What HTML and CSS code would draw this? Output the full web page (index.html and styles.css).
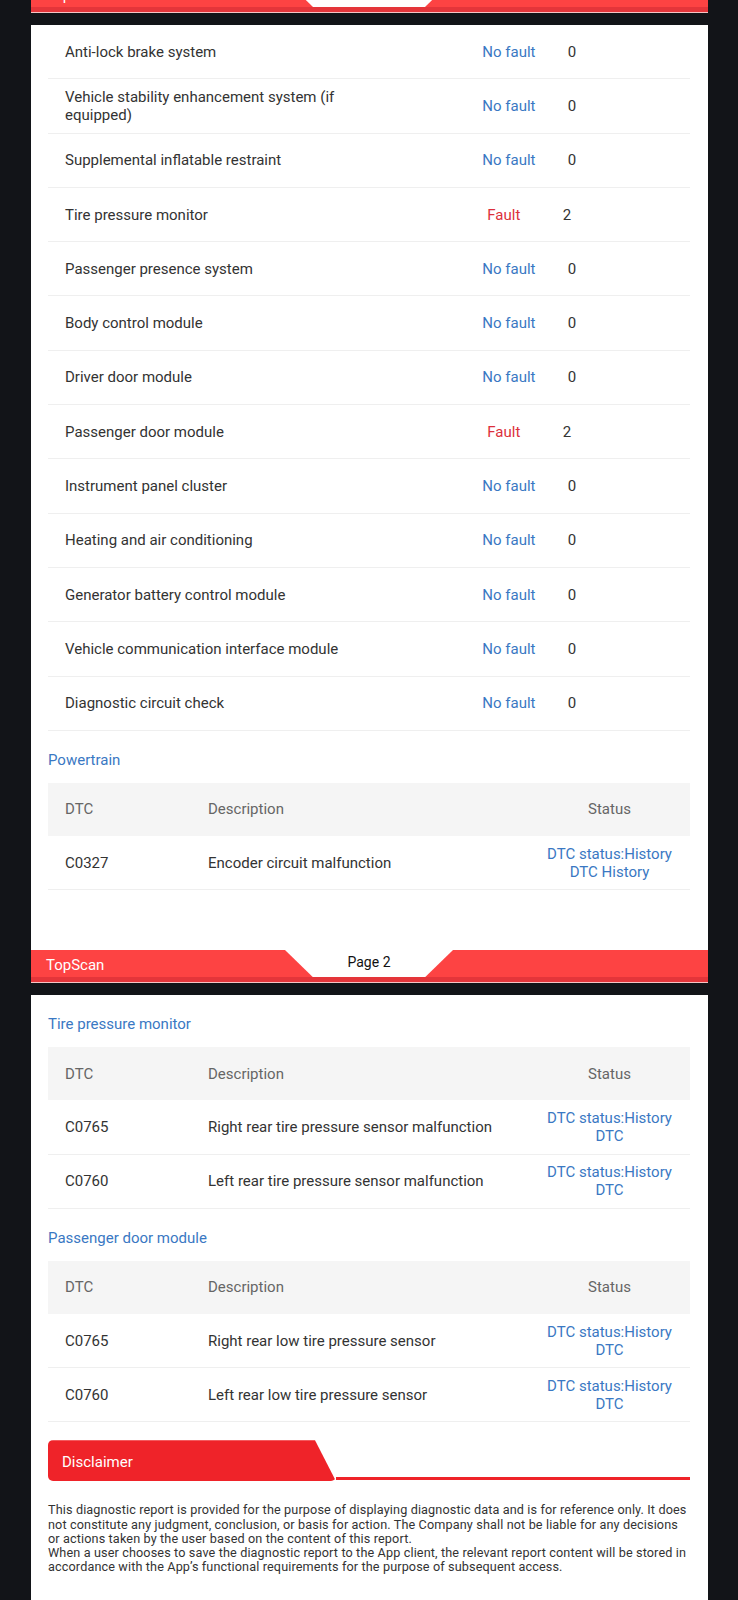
FILE: index.html
```html
<!DOCTYPE html>
<html lang="en">
<head>
  <meta charset="UTF-8">
  <title>Diagnostic Report</title>
  <link rel="stylesheet" href="styles.css">
</head>
<body>
  <!-- bottom of page 1, scrolled out of view -->
  <div class="page-foot cut">
    <div class="foot-main">
      <span class="brand">TopScan</span>
      <span class="notch"></span>
    </div>
    <div class="foot-strip"></div>
  </div>

  <div class="page">
    <div class="page-body first">
      <ul class="sys-list">
        <li class="sys-row"><span class="sys-name">Anti-lock brake system</span><span class="sys-result"><span class="ok">No fault</span><span class="count">0</span></span></li>
        <li class="sys-row"><span class="sys-name">Vehicle stability enhancement system (if equipped)</span><span class="sys-result"><span class="ok">No fault</span><span class="count">0</span></span></li>
        <li class="sys-row"><span class="sys-name">Supplemental inflatable restraint</span><span class="sys-result"><span class="ok">No fault</span><span class="count">0</span></span></li>
        <li class="sys-row"><span class="sys-name">Tire pressure monitor</span><span class="sys-result"><span class="bad">Fault</span><span class="count">2</span></span></li>
        <li class="sys-row"><span class="sys-name">Passenger presence system</span><span class="sys-result"><span class="ok">No fault</span><span class="count">0</span></span></li>
        <li class="sys-row"><span class="sys-name">Body control module</span><span class="sys-result"><span class="ok">No fault</span><span class="count">0</span></span></li>
        <li class="sys-row"><span class="sys-name">Driver door module</span><span class="sys-result"><span class="ok">No fault</span><span class="count">0</span></span></li>
        <li class="sys-row"><span class="sys-name">Passenger door module</span><span class="sys-result"><span class="bad">Fault</span><span class="count">2</span></span></li>
        <li class="sys-row"><span class="sys-name">Instrument panel cluster</span><span class="sys-result"><span class="ok">No fault</span><span class="count">0</span></span></li>
        <li class="sys-row"><span class="sys-name">Heating and air conditioning</span><span class="sys-result"><span class="ok">No fault</span><span class="count">0</span></span></li>
        <li class="sys-row"><span class="sys-name">Generator battery control module</span><span class="sys-result"><span class="ok">No fault</span><span class="count">0</span></span></li>
        <li class="sys-row"><span class="sys-name">Vehicle communication interface module</span><span class="sys-result"><span class="ok">No fault</span><span class="count">0</span></span></li>
        <li class="sys-row"><span class="sys-name">Diagnostic circuit check</span><span class="sys-result"><span class="ok">No fault</span><span class="count">0</span></span></li>
      </ul>

      <h4 class="group">Powertrain</h4>
      <div class="dtc-table">
        <div class="dtc-head"><span>DTC</span><span>Description</span><span class="st">Status</span></div>
        <div class="dtc-row"><span>C0327</span><span>Encoder circuit malfunction</span><span class="st">DTC status:History<br>DTC History</span></div>
      </div>
    </div>

    <div class="page-foot">
      <div class="foot-main">
        <span class="brand">TopScan</span>
        <span class="notch">Page 2</span>
      </div>
      <div class="foot-strip"></div>
    </div>
  </div>

  <div class="page">
    <div class="page-body">
      <h4 class="group">Tire pressure monitor</h4>
      <div class="dtc-table">
        <div class="dtc-head"><span>DTC</span><span>Description</span><span class="st">Status</span></div>
        <div class="dtc-row"><span>C0765</span><span>Right rear tire pressure sensor malfunction</span><span class="st">DTC status:History<br>DTC</span></div>
        <div class="dtc-row"><span>C0760</span><span>Left rear tire pressure sensor malfunction</span><span class="st">DTC status:History<br>DTC</span></div>
      </div>

      <h4 class="group">Passenger door module</h4>
      <div class="dtc-table">
        <div class="dtc-head"><span>DTC</span><span>Description</span><span class="st">Status</span></div>
        <div class="dtc-row"><span>C0765</span><span>Right rear low tire pressure sensor</span><span class="st">DTC status:History<br>DTC</span></div>
        <div class="dtc-row"><span>C0760</span><span>Left rear low tire pressure sensor</span><span class="st">DTC status:History<br>DTC</span></div>
      </div>

      <div class="disc-head">
        <div class="disc-tab">Disclaimer</div>
        <div class="disc-line"></div>
      </div>
      <p class="disc-text">This diagnostic report is provided for the purpose of displaying diagnostic data and is for reference only. It does not constitute any judgment, conclusion, or basis for action. The Company shall not be liable for any decisions or actions taken by the user based on the content of this report.<br>When a user chooses to save the diagnostic report to the App client, the relevant report content will be stored in accordance with the App’s functional requirements for the purpose of subsequent access.</p>
    </div>
  </div>
</body>
</html>
```

FILE: styles.css
```css
body {
  margin: 0;
  padding: 0 30.5px;
  background: #121418;
  font-family: Roboto, "Liberation Sans", sans-serif;
  font-size: 15px;
  color: #333;
}
.page {
  margin-top: 12px;
  background: #fff;
}
.page-body {
  padding: 0 17.5px 60px;
}
.page-body.first {
  padding-bottom: 59.7px;
}

/* red footer band with the page notch */
.page-foot {
  background: #fd4343;
}
.page-foot.cut {
  margin-top: -20.3px;
}
.foot-main {
  display: flex;
  height: 27.3px;
}
.brand {
  width: 254.5px;
  padding: 6px 0 0 15.5px;
  box-sizing: border-box;
  color: #fff;
}
.notch {
  width: 168px;
  padding-top: 4px;
  background: #fff;
  clip-path: polygon(0 0, 100% 0, calc(100% - 28px) 100%, 28px 100%);
  text-align: center;
  font-size: 14px;
  color: #111;
}
.foot-strip {
  height: 5px;
  background: #e4353a;
  border-bottom: 1px solid #f6c4c4;
}

/* system list */
.sys-list {
  list-style: none;
  margin: 0;
  padding: 0;
}
.sys-row {
  display: flex;
  align-items: center;
  height: 54.3px;
  box-sizing: border-box;
  border-bottom: 1px solid #efefef;
}
.sys-name {
  width: 50%;
  padding: 0 17px;
  box-sizing: border-box;
}
.sys-result {
  display: flex;
  justify-content: space-around;
  width: 126.4px;
  margin: 0 97.5px 0 auto;
}
.ok {
  color: #3a78c3;
}
.bad {
  color: #dc2f3c;
}

.group {
  margin: 0;
  height: 52px;
  padding-top: 20px;
  box-sizing: border-box;
  font-weight: normal;
  color: #3a78c3;
}

/* DTC tables */
.dtc-head, .dtc-row {
  display: grid;
  grid-template-columns: 143px 1fr 161px;
  align-items: center;
}
.dtc-head span, .dtc-row span {
  padding-left: 17px;
}
.dtc-head {
  height: 53.2px;
  background: #f5f5f5;
  color: #666;
}
.dtc-row {
  height: 54.2px;
  box-sizing: border-box;
  border-bottom: 1px solid #efefef;
}
.dtc-head .st, .dtc-row .st {
  padding: 0 17px;
  text-align: center;
}
.dtc-row .st {
  color: #3a78c3;
}

/* disclaimer */
.disc-head {
  display: flex;
  align-items: flex-end;
  margin-top: 18px;
}
.disc-tab {
  width: 288px;
  height: 41px;
  padding: 13px 0 0 14px;
  box-sizing: border-box;
  background: #ef2329;
  border-radius: 5px;
  clip-path: polygon(0 0, 267px 0, 100% 100%, 0 100%);
  color: #fff;
}
.disc-line {
  flex: 1;
  height: 3.5px;
  margin-bottom: 1px;
  background: #ef2329;
}
.disc-text {
  margin: 22px 0 0;
  font-size: 12.65px;
  letter-spacing: 0.13px;
  line-height: 14.2px;
  color: #333;
}
```
